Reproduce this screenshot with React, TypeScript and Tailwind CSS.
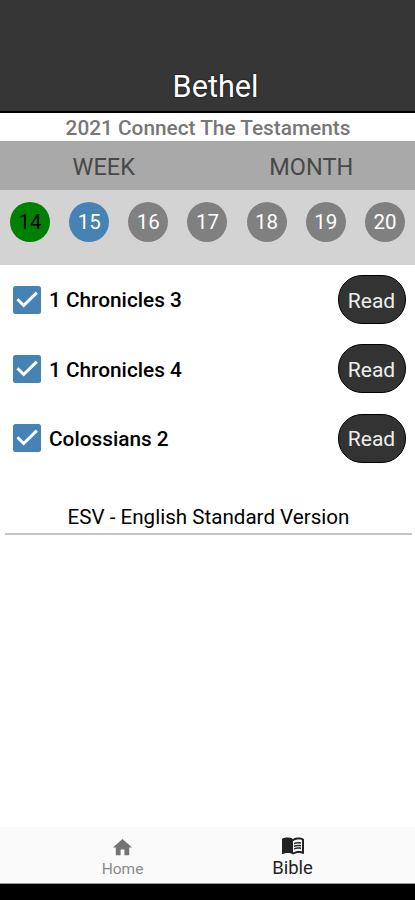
import React from "react";
import { MdHome, MdMenuBook } from "react-icons/md";

const days = [
  { n: "14", style: "bg-[#008000] text-black" },
  { n: "15", style: "bg-[#4682b4] text-white" },
  { n: "16", style: "bg-[#808080] text-white" },
  { n: "17", style: "bg-[#808080] text-white" },
  { n: "18", style: "bg-[#808080] text-white" },
  { n: "19", style: "bg-[#808080] text-white" },
  { n: "20", style: "bg-[#808080] text-white" },
];

const readings = ["1 Chronicles 3", "1 Chronicles 4", "Colossians 2"];

function Checkbox() {
  return (
    <svg viewBox="0 0 28 28" className="block h-7 w-7">
      <rect width="28" height="28" rx="2.5" fill="#4682b4" />
      <path d="M4.4 13.2 10.7 19.5 23.8 6.6" fill="none" stroke="#fff" strokeWidth="3" />
    </svg>
  );
}

export default function App() {
  return (
    <div className="flex h-[900px] w-full flex-col overflow-hidden bg-white font-['Roboto',sans-serif] whitespace-nowrap text-black">
      <header className="flex h-[113px] shrink-0 items-end justify-center border-b-2 border-black bg-[#363636] pb-[6px]">
        <h1 className="pl-4 text-[30.6px] leading-9 text-white [text-shadow:0_0_2px_#000]">Bethel</h1>
      </header>
      <div className="flex h-7 shrink-0 items-center justify-center pt-0.5">
        <h2 className="pl-px text-[20.8px] leading-6 font-medium text-[#777]">2021 Connect The Testaments</h2>
      </div>
      <div className="grid h-[49px] shrink-0 grid-cols-2 items-center bg-[#a9a9a9] pt-[4px] text-center text-[23.5px] text-[#484848]">
        <span>WEEK</span>
        <span>MONTH</span>
      </div>
      <div className="flex h-[75px] shrink-0 items-start justify-between bg-[#d3d3d3] px-2.5 pt-3">
        {days.map((d) => (
          <span key={d.n} className={`flex h-10 w-10 items-center justify-center rounded-full text-[20.5px] ${d.style}`}>
            {d.n}
          </span>
        ))}
      </div>
      <ul className="flex flex-col gap-[20.3px] pt-[10px] pr-[9.5px] pl-[13px]">
        {readings.map((r) => (
          <li key={r} className="flex h-[49px] items-center">
            <Checkbox />
            <span className="ml-2 flex-1 pt-[3px] text-[20.8px] font-medium">{r}</span>
            <button className="h-[49px] w-[68px] rounded-[24px] border border-black bg-[#333] pt-[4px] text-[21px] text-[#eee]">
              Read
            </button>
          </li>
        ))}
      </ul>
      <div className="mr-[3px] ml-[5px] mt-[42px] border-b-2 border-[#c4c4c4] pb-[4px] text-center text-[20.6px] leading-6">
        ESV - English Standard Version
      </div>
      <nav className="mt-auto flex h-[57px] shrink-0 justify-center gap-[118px] border-b border-[#999] bg-[#fafafa] pt-2">
        <div className="flex w-[52px] flex-col items-center text-[#747474]">
          <MdHome size={23} className="relative top-px" />
          <span className="mt-px text-[15.5px] leading-5 text-[#8b8b8b]">Home</span>
        </div>
        <div className="flex w-[52px] flex-col items-center text-[#222]">
          <MdMenuBook size={24} className="-mt-0.5" />
          <span className="mt-px text-[18.5px] leading-5">Bible</span>
        </div>
      </nav>
      <div className="h-4 shrink-0 bg-black" />
    </div>
  );
}
